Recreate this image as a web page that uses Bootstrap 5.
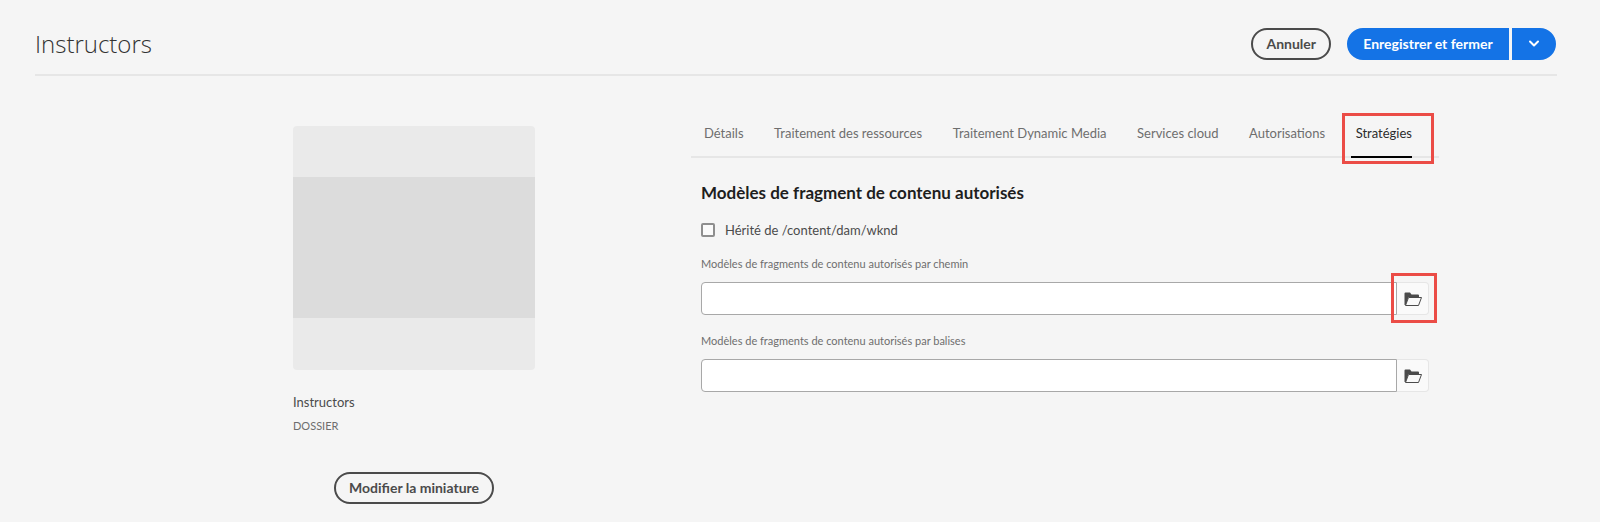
<!DOCTYPE html>
<html lang="fr">
<head>
<meta charset="utf-8">
<meta name="viewport" content="width=device-width, initial-scale=1">
<title>Instructors</title>
<link rel="stylesheet" href="https://cdn.jsdelivr.net/npm/bootstrap@5.3.0/dist/css/bootstrap.min.css">
<style>
body { background: #f5f5f5; color: #4b4b4b; font-family: Lato, "Open Sans", sans-serif; font-size: 13px; line-height: 20px; }
.page-header { margin: 0 43px 0 35px; height: 76px; padding: 28px 1px 0 0; border-bottom: 2px solid #e6e6e6; }
.page-title { font-family: "Open Sans", Lato, sans-serif; font-weight: 300; font-size: 24px; line-height: 32px; color: #323232; }
.pill { --bs-btn-font-size: 14px; --bs-btn-font-weight: 700; --bs-btn-line-height: 20px; --bs-btn-padding-y: 4px; --bs-btn-padding-x: 13px; --bs-btn-border-width: 2px; --bs-btn-border-radius: 16px; white-space: nowrap; }
.pill-outline { --bs-btn-color: #4b4b4b; --bs-btn-border-color: #4b4b4b; --bs-btn-hover-color: #fff; --bs-btn-hover-bg: #4b4b4b; --bs-btn-hover-border-color: #4b4b4b; }
.pill-cta { --bs-btn-color: #fff; --bs-btn-bg: #1473e6; --bs-btn-border-color: #1473e6; --bs-btn-hover-color: #fff; --bs-btn-hover-bg: #0d66d0; --bs-btn-hover-border-color: #0d66d0; }
.split { gap: 3px; }
.split .pill-cta:first-child { border-radius: 16px 0 0 16px; min-width: 162px; }
.split .pill-cta:last-child { border-radius: 0 16px 16px 0; width: 44px; padding: 0; }
.page-grid { display: grid; grid-template-columns: 293fr 242px 156fr minmax(0, 748fr) 161fr; }
.side { grid-column: 2; padding-top: 50px; }
.panel { grid-column: 4; padding-top: 38px; }
.thumb { background: #eaeaea; border-radius: 4px; padding: 51px 0 52px; }
.thumb-inner { background: #dcdcdc; height: 141px; }
.item-name { margin-top: 22px; }
.kind { font-size: 11px; color: #6e6e6e; }
.thumb-action { margin-top: 36px; }
.tabbar { border-bottom: 2px solid #e6e6e6; justify-content: space-between; padding: 0 27px 0 8px; }
.tabbar .nav-link { padding: 9px 0 13px 5px; color: #6e6e6e; position: relative; white-space: nowrap; }
.tabbar .nav-link.active { color: #2c2c2c; }
.tabbar .nav-link.active::before { content: ""; position: absolute; left: 0; right: 0; bottom: -2px; height: 2px; background: #000; }
.callout { position: absolute; border: 3px solid #eb4c46; pointer-events: none; }
.callout-tab { inset: -1px -22px -8px -9px; }
.callout-browse { inset: -9px -8px -8px -6px; }
.fields { padding: 23px 10px 0; }
.section-title { font-size: 17px; line-height: 24px; font-weight: 700; color: #1e1e1e; margin-bottom: 15px; }
.inherit { gap: 10px; }
.inherit .form-check-input { width: 14px; height: 14px; margin: 0; border: 2px solid #8e8e8e; border-radius: 2px; background-color: #fafafa; }
.field-label { font-size: 11px; line-height: 16px; color: #6e6e6e; margin-bottom: 10px; }
.path-row { margin-bottom: 18px; }
.path-input { height: 33px; border: 1px solid #a8a8a8; border-radius: 4px 0 0 4px; }
.browse { width: 32px; height: 33px; padding: 0; flex-shrink: 0; border: 1px solid #e6e6e6; border-left: 0; border-radius: 0 4px 4px 0; background: #fafafa; }
.browse svg, .pill svg { display: block; margin: auto; }
</style>
</head>
<body>
<header class="page-header d-flex justify-content-between align-items-start">
  <h1 class="page-title mb-0">Instructors</h1>
  <div class="d-flex gap-3">
    <button type="button" class="btn pill pill-outline">Annuler</button>
    <div class="split d-flex">
      <button type="button" class="btn pill pill-cta">Enregistrer et fermer</button>
      <button type="button" class="btn pill pill-cta" aria-label="Plus"><svg width="12" height="8" viewBox="0 0 12 8" fill="none" stroke="#fff" stroke-width="2" stroke-linecap="round" stroke-linejoin="round"><path d="M2 1.500 6 5.500 10 1.500"/></svg></button>
    </div>
  </div>
</header>
<main class="page-grid">
  <section class="side">
    <div class="thumb"><div class="thumb-inner"></div></div>
    <div class="item-name">Instructors</div>
    <div class="kind mt-1">DOSSIER</div>
    <div class="thumb-action text-center"><button type="button" class="btn pill pill-outline">Modifier la miniature</button></div>
  </section>
  <section class="panel">
    <nav class="nav tabbar flex-nowrap">
      <a class="nav-link" href="#">Détails</a>
      <a class="nav-link" href="#">Traitement des ressources</a>
      <a class="nav-link" href="#">Traitement Dynamic Media</a>
      <a class="nav-link" href="#">Services cloud</a>
      <a class="nav-link" href="#">Autorisations</a>
      <a class="nav-link active" href="#" aria-current="page">Stratégies<span class="callout callout-tab"></span></a>
    </nav>
    <form class="fields">
      <h2 class="section-title">Modèles de fragment de contenu autorisés</h2>
      <div class="inherit d-flex align-items-center mb-3">
        <input class="form-check-input" type="checkbox" id="inherit">
        <label for="inherit">Hérité de /content/dam/wknd</label>
      </div>
      <label class="field-label d-block" for="by-path">Modèles de fragments de contenu autorisés par chemin</label>
      <div class="path-row d-flex">
        <input type="text" class="form-control path-input" id="by-path">
        <div class="position-relative flex-shrink-0">
          <button type="button" class="btn browse d-block" aria-label="Parcourir"><svg width="18" height="14" viewBox="0 0 18 14"><path fill="#4b4b4b" d="M.5 13V1.500a1 1 0 0 1 1-1H6L7.500 2.500H14a1 1 0 0 1 1 1V5H4.500L2 13z"/><path fill="#fafafa" stroke="#4b4b4b" stroke-linejoin="round" d="M4.500 5.500h13l-3 8H1.500z"/></svg></button>
          <span class="callout callout-browse"></span>
        </div>
      </div>
      <label class="field-label d-block" for="by-tag">Modèles de fragments de contenu autorisés par balises</label>
      <div class="path-row d-flex">
        <input type="text" class="form-control path-input" id="by-tag">
        <button type="button" class="btn browse" aria-label="Parcourir"><svg width="18" height="14" viewBox="0 0 18 14"><path fill="#4b4b4b" d="M.5 13V1.500a1 1 0 0 1 1-1H6L7.500 2.500H14a1 1 0 0 1 1 1V5H4.500L2 13z"/><path fill="#fafafa" stroke="#4b4b4b" stroke-linejoin="round" d="M4.500 5.500h13l-3 8H1.500z"/></svg></button>
      </div>
    </form>
  </section>
</main>
<script src="https://cdn.jsdelivr.net/npm/bootstrap@5.3.0/dist/js/bootstrap.bundle.min.js"></script>
</body>
</html>
